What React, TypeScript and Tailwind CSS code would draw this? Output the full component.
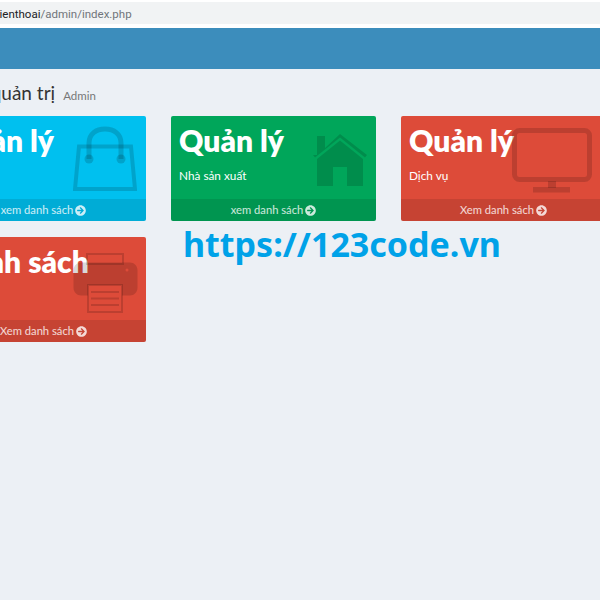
import { FaArrowCircleRight } from "react-icons/fa";
import type { ReactNode } from "react";

const font = { fontFamily: 'Lato, "Noto Sans", sans-serif' };

function Bag() {
  return (
    <svg width="64" height="65" viewBox="0 0 64 65" fill="none" stroke="currentColor">
      <path d="M6 20.5H58L62 63H2Z" strokeWidth="4" />
      <path d="M16 33V17C16 8 23 3 32 3C41 3 48 8 48 17V33" strokeWidth="5" />
      <circle cx="16" cy="33" r="4.5" fill="currentColor" stroke="none" />
      <circle cx="48" cy="33" r="4.5" fill="currentColor" stroke="none" />
    </svg>
  );
}

function House() {
  return (
    <svg width="56" height="56" viewBox="0 0 56 56" fill="currentColor">
      <path d="M5 24V5H13V17L28 3L55 24L53 26.5L28 6.5L3 26.5L1 24Z" />
      <path fillRule="evenodd" d="M5 28L28 9.5L51 28V55H35V36H21V55H5Z" />
    </svg>
  );
}

function Monitor() {
  return (
    <svg width="80" height="65" viewBox="0 0 80 65" fill="none" stroke="currentColor">
      <rect x="2.5" y="2.5" width="75" height="49" rx="5" strokeWidth="5" />
      <rect x="36" y="53" width="8" height="7" fill="currentColor" stroke="none" />
      <rect x="21" y="59" width="37" height="5.5" fill="currentColor" stroke="none" />
    </svg>
  );
}

function Printer() {
  return (
    <svg width="65" height="60" viewBox="0 0 65 60" fill="none">
      <rect x="14" y="1" width="36" height="10" stroke="currentColor" strokeWidth="2" />
      <path d="M8 9.5H57C61 9.5 64.5 13 64.5 17V35C64.5 39 61 42.5 57 42.5H8C4 42.5.5 39 .5 35V17C.5 13 4 9.5 8 9.5Z" fill="currentColor" />
      <rect x="15" y="32" width="34" height="27" fill="#dd4b39" stroke="currentColor" strokeWidth="2" />
      <path d="M18 39H46M18 45.5H46M18 52H46" stroke="currentColor" strokeWidth="2" />
      <circle cx="54" cy="17" r="1.5" fill="#dd4b39" />
    </svg>
  );
}

function Card({ title, sub, link, color, icon, iconClass }: { title: string; sub: string; link: string; color: string; icon: ReactNode; iconClass: string }) {
  return (
    <div className={`relative h-[105px] w-[205px] shrink-0 overflow-hidden rounded-[2px] ${color}`}>
      <div className="h-[83px] px-[8px] pt-[2px] text-white">
        <div className="whitespace-nowrap text-[30px] font-extrabold leading-[44px]">{title}</div>
        <div className="mt-[5px] h-[18px] text-[11.8px] leading-[18px]">{sub}</div>
      </div>
      <div className={`absolute text-black/15 ${iconClass}`}>{icon}</div>
      <div className="flex h-[22px] items-center justify-center gap-[2px] bg-black/10 text-[11.2px] text-white/80">
        <span>{link}</span>
        <FaArrowCircleRight className="text-[11px]" />
      </div>
    </div>
  );
}

export default function App() {
  return (
    <div className="h-[600px] w-[600px] overflow-hidden bg-[#ecf0f5]" style={font}>
      <div className="h-[28px] bg-white pt-[2px]">
        <div className="h-[22px] overflow-hidden whitespace-nowrap bg-[#f1f3f4] font-['Roboto'] text-[11.5px] leading-[24px] text-[#70757a]">
          <span className="ml-[-7px] text-[#202124]">dienthoai</span>/admin/index.php
        </div>
      </div>
      <div className="h-[41px] bg-[#3c8dbc]" />
      <div className="ml-[-59px] w-[700px]">
        <div className="flex h-[47px] items-end pb-[9px] text-[#333]">
          <span className="ml-[-1px] whitespace-nowrap text-[19px] leading-[28px]">
            Trang quản trị
          </span>
          <span className="mb-[3px] ml-[8px] text-[11.5px] leading-[16px] text-[#777]">Admin</span>
        </div>
        <div className="flex gap-[25px]">
          <Card title="Quản lý" sub="Sản phẩm" link="xem danh sách" color="bg-[#00c0ef]" icon={<Bag />} iconClass="left-[132px] top-[10px]" />
          <Card title="Quản lý" sub="Nhà sản xuất" link="xem danh sách" color="bg-[#00a65a]" icon={<House />} iconClass="left-[141px] top-[15px]" />
          <Card title="Quản lý" sub="Dịch vụ" link="Xem danh sách" color="bg-[#dd4b39]" icon={<Monitor />} iconClass="left-[111px] top-[12px]" />
        </div>
        <div className="mt-[16px] flex gap-[37px]">
          <Card title="Danh sách" sub="" link="Xem danh sách" color="bg-[#dd4b39]" icon={<Printer />} iconClass="left-[132px] top-[16px]" />
          <div className="mt-[-18px] whitespace-nowrap font-['Noto_Sans'] text-[34px] font-bold leading-[50px] text-[#00a2e8]">
            https://123code.vn
          </div>
        </div>
      </div>
    </div>
  );
}
